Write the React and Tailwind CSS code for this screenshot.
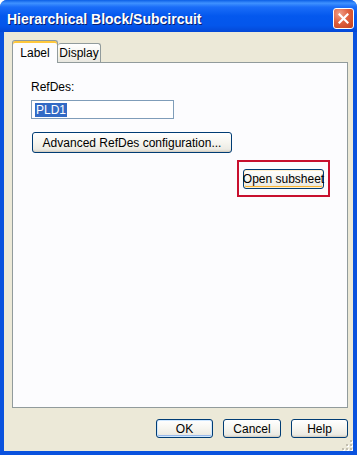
import React from 'react';

const font = { fontFamily: '"Liberation Sans", "DejaVu Sans", sans-serif' };

const XpButton = ({ children, className = '', variant }) => {
  const inner =
    variant === 'default'
      ? 'shadow-[inset_0_0_0_1px_#cee7ff,inset_0_-1px_0_1px_#98b8ea]'
      : variant === 'hot'
      ? 'shadow-[inset_0_0_0_1px_#fff0cf,inset_0_-1px_0_1px_#f8b330]'
      : 'shadow-[inset_0_-1px_0_0_#d6d0c5]';
  return (
    <div
      className={`flex items-center justify-center whitespace-nowrap rounded-[3px] border border-[#003c74] bg-[linear-gradient(180deg,#ffffff_0%,#f6f5ef_50%,#ecebe4_85%,#d8d4c8_100%)] text-[12px] text-black ${inner} ${className}`}
    >
      {children}
    </div>
  );
};

const CloseButton = () => (
  <div className="flex h-[21px] w-[21px] items-center justify-center rounded-[3px] border border-white bg-[radial-gradient(circle_at_30%_25%,#f0a08a_0%,#e0603e_45%,#c2401e_100%)]">
    <svg width="11" height="11" viewBox="0 0 11 11">
      <path d="M1.5 1.5 L9.5 9.5 M9.5 1.5 L1.5 9.5" stroke="white" strokeWidth="2.2" strokeLinecap="square" />
    </svg>
  </div>
);

const Grip = () => (
  <svg width="12" height="12" viewBox="0 0 12 12" className="absolute bottom-0 right-0">
    {[
      [9, 1], [9, 5], [5, 5], [9, 9], [5, 9], [1, 9],
    ].map(([x, y], i) => (
      <g key={i}>
        <rect x={x + 1} y={y + 1} width="2" height="2" fill="#ffffff" />
        <rect x={x} y={y} width="2" height="2" fill="#c3bfb0" />
      </g>
    ))}
  </svg>
);

export default function App() {
  return (
    <div className="h-[456px] w-[360px] bg-white" style={font}>
      <div className="flex h-[455px] w-[357px] flex-col overflow-hidden rounded-t-[7px] bg-[#0a52de]">
        <div className="flex h-[32px] shrink-0 items-center justify-between bg-[linear-gradient(180deg,#0b5fe6_0%,#3f92ff_10%,#1a6df8_22%,#0458ee_50%,#0456eb_80%,#0448d6_100%)] pl-[7px] pr-[3px] pt-[5px]">
          <span className="pt-[1px] text-[14px] font-bold text-white [text-shadow:1px_1px_0_#0a1f6e]">
            Hierarchical Block/Subcircuit
          </span>
          <CloseButton />
        </div>

        <div className="relative mx-[4px] mb-[4px] flex flex-1 flex-col bg-[#ece9d8] pl-[8px] pr-[5px] pt-[8px]">
          <div className="flex items-end">
            <div className="relative z-10 -mb-px flex h-[23px] w-[46px] items-center justify-center rounded-t-[3px] border border-b-0 border-[#919b9c] bg-[#fcfcfe] pt-[2px] text-[12px] text-black shadow-[inset_0_2px_0_0_#ffc83c]">
              Label
            </div>
            <div className="flex h-[19px] w-[43px] items-center justify-center rounded-t-[3px] border border-b-0 border-l-0 border-[#919b9c] bg-[linear-gradient(180deg,#ffffff_0%,#f4f3ee_60%,#e8e7e0_100%)] text-[12px] text-black">
              Display
            </div>
          </div>

          <div className="flex h-[346px] flex-col border border-[#919b9c] bg-[#fcfcfe] pl-[18px] pr-[17px] pt-[18px]">
            <div className="text-[12px] leading-[13px] text-black">RefDes:</div>
            <div className="mt-[6px] flex h-[19px] w-[143px] items-center border border-[#7f9db9] bg-white pl-[3px]">
              <span className="bg-[#316ac5] px-px text-[12px] leading-[14px] text-white">PLD1</span>
            </div>
            <XpButton className="ml-px mt-[13px] h-[21px] w-[200px]">Advanced RefDes configuration...</XpButton>
            <div className="mt-[7px] flex justify-end">
              <div className="flex h-[37px] w-[93px] items-center justify-center border-2 border-[#c8102e]">
                <XpButton variant="hot" className="h-[20px] w-[81px] bg-[linear-gradient(180deg,#fffdf3_0%,#fdf6df_60%,#f4e6b8_100%)]">
                  Open subsheet
                </XpButton>
              </div>
            </div>
          </div>

          <div className="mt-[11px] flex justify-end gap-[10px]">
            <XpButton variant="default" className="h-[19px] w-[57px]">OK</XpButton>
            <XpButton className="h-[19px] w-[58px]">Cancel</XpButton>
            <XpButton className="h-[19px] w-[57px]">Help</XpButton>
          </div>
          <Grip />
        </div>
      </div>
    </div>
  );
}
